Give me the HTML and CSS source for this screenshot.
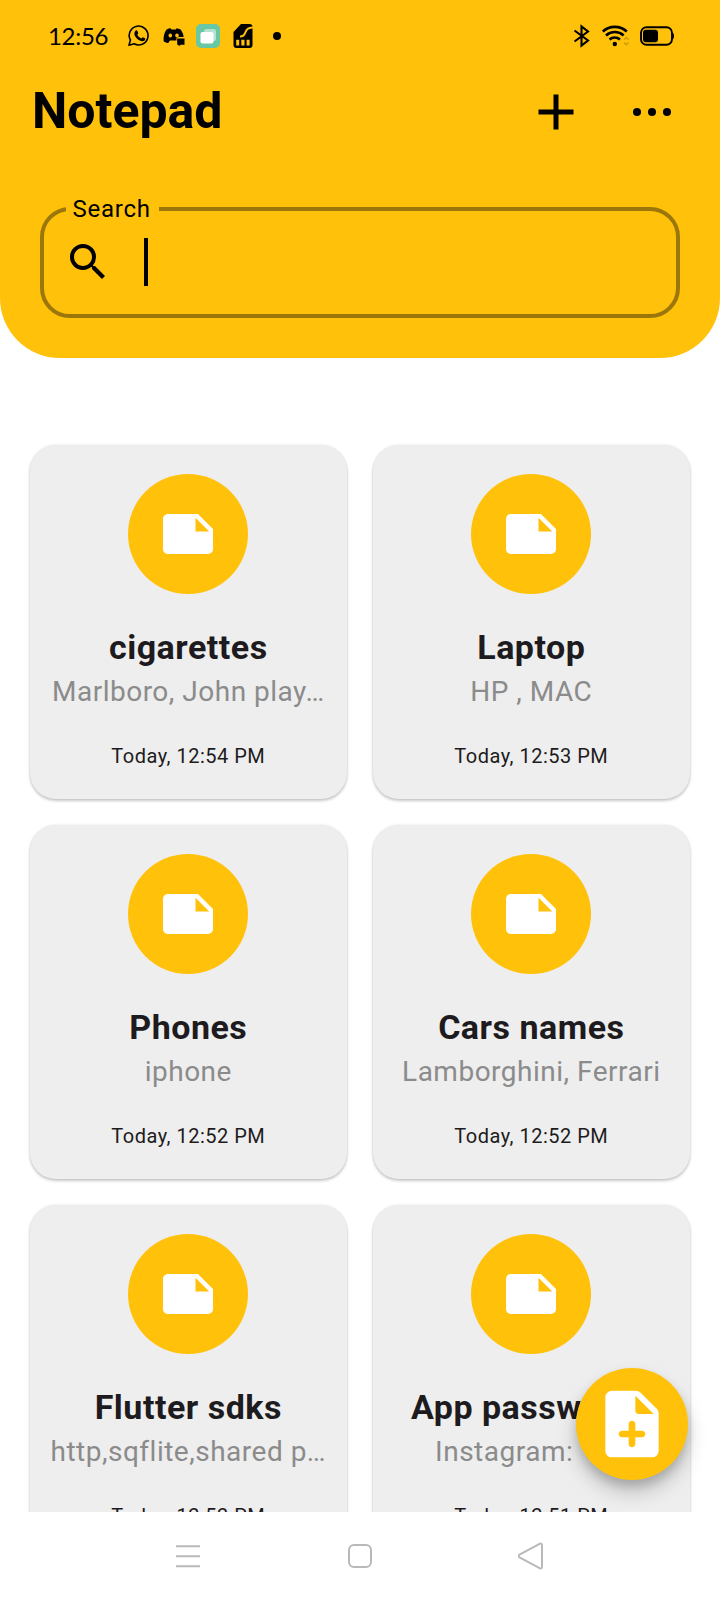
FILE: index.html
```html
<!DOCTYPE html>
<html lang="en">
<head>
<meta charset="utf-8">
<title>Notepad</title>
<link rel="stylesheet" href="styles.css">
</head>
<body>
<svg class="defs" width="0" height="0">
  <symbol id="note" viewBox="0 0 24 24"><path d="M22 10l-6-6H4c-1.1 0-2 .9-2 2v12.01c0 1.1.9 1.99 2 1.99l16-.01c1.1 0 2-.89 2-1.99v-8zm-7-4.5l5.5 5.5H15V5.5z"/></symbol>
</svg>
<div class="screen">
  <header class="header">
    <div class="status">
      <span class="time">12:56</span>
      <svg class="status-left" width="160" height="28" viewBox="124 22 160 28">
        <path d="M129 45.200l1.400-5.200a9.400 9.400 0 1 1 3.700 3.700z" fill="none" stroke="#000" stroke-width="1.6" stroke-linejoin="round"/>
        <path d="M135.300 31c.8-.9 1.700-.8 2.100.1l.8 1.900c.2.600-.6 1.200-.9 1.700.9 1.800 2.300 3 4.100 3.700.5-.4.9-1.400 1.500-1.200l2 1c.7.400.4 1.500-.3 2.200-1.200 1.100-3 .9-4.900 0-2.400-1.100-4.200-3.100-5-4.900-.6-1.500-.3-3.500.6-4.500z"/>
        <path d="M166.500 29.600c1.700-.9 3-1.200 4.200-1.300l.6 1.200h4.600l.6-1.200c1.400.2 2.800.6 4.200 1.300 1.800 2.600 2.700 5 2.900 7.400h-7.100v3.500h-6.500l-1.800 2.400c-1.500 0-3-.6-4.500-1.500-.5-4.400.3-8 2.800-11.800zM170.300 33.600a1.800 2 0 1 0 .01 0zM177 33.600a1.800 2 0 1 0 .01 0z" fill-rule="evenodd"/>
        <path d="M177.200 38.400h7.300v6.300h-3.700l-2 1.500-.3-1.500h-1.300z"/>
        <rect x="196" y="24" width="24" height="24" rx="5" fill="#68c8a3"/>
        <rect x="204" y="29" width="12" height="12" rx="2.500" fill="#b4e4d1"/>
        <rect x="200.500" y="32" width="13" height="11.500" rx="2" fill="#fff"/>
        <path d="M241 24h8.500a3 3 0 0 1 3 3v18a3 3 0 0 1-3 3h-13a3 3 0 0 1-3-3V32z"/>
        <path d="M240 36.500c6.500 0 4-5.500 8-7.800 1.700-1 3.500-1 5-1.200" fill="none" stroke="#ffc10a" stroke-width="2"/>
        <path d="M236.200 39.800h3v5.800h-3zM241.300 39.800h3.200v5.800h-3.200zM246.600 39.800h3v5.800h-3z" fill="#ffc10a"/>
        <circle cx="277" cy="36" r="4"/>
      </svg>
      <svg class="status-right" width="108" height="28" viewBox="570 22 108 28">
        <path d="M574.500 30.500l13.500 10-6.500 5V26.500l6.500 5-13.500 10" fill="none" stroke="#000" stroke-width="2.100"/>
        <g fill="none" stroke="#000" stroke-width="2.600">
          <path d="M602.800 31.500a18 18 0 0 1 24 0"/><path d="M606 35.500a13 13 0 0 1 17.600 0"/><path d="M609.500 39.500a8 8 0 0 1 10.500 0"/>
        </g>
        <circle cx="614.800" cy="44" r="2.200"/>
        <path d="M624 39.800l2.300-2.300 2.300 2.300M624 42.500l2.300 2.300 2.300-2.300" fill="none" stroke="#cf9c08" stroke-width="1.500"/>
        <rect x="641" y="27.300" width="31" height="17.400" rx="5.500" fill="none" stroke="#000" stroke-width="1.900"/>
        <rect x="643" y="29.700" width="15" height="12.600" rx="3"/>
        <path d="M672.500 32.500c2 1 2 6 0 7z"/>
      </svg>
    </div>
    <div class="appbar">
      <h1 class="app-title">Notepad</h1>
      <div class="actions">
        <svg width="60" height="60" viewBox="0 0 24 24"><path d="M19 13h-6v6h-2v-6H5v-2h6V5h2v6h6v2z"/></svg>
        <svg width="60" height="60" viewBox="0 0 60 60"><circle cx="15" cy="30" r="4"/><circle cx="30" cy="30" r="4"/><circle cx="45" cy="30" r="4"/></svg>
      </div>
    </div>
    <fieldset class="search">
      <legend class="search-label">Search</legend>
      <div class="search-row">
        <svg width="48" height="48" viewBox="0 0 24 24"><path d="M15.500 14h-.79l-.28-.27A6.471 6.471 0 0 0 16 9.500 6.500 6.500 0 1 0 9.500 16c1.610 0 3.090-.59 4.230-1.570l.27.28v.79l5 4.990L20.490 19l-4.990-5zm-6 0C7.010 14 5 11.990 5 9.500S7.010 5 9.500 5 14 7.010 14 9.500 11.990 14 9.500 14z"/></svg>
        <span class="caret"></span>
      </div>
    </fieldset>
  </header>

  <main class="notes">
    <article class="card"><span class="badge"><svg width="60" height="60"><use href="#note"/></svg></span><h2 class="title">cigarettes</h2><p class="body">Marlboro, John play&zwnj;…</p><p class="date">Today, 12:54 PM</p></article>
    <article class="card"><span class="badge"><svg width="60" height="60"><use href="#note"/></svg></span><h2 class="title">Laptop</h2><p class="body">HP , MAC</p><p class="date">Today, 12:53 PM</p></article>
    <article class="card"><span class="badge"><svg width="60" height="60"><use href="#note"/></svg></span><h2 class="title">Phones</h2><p class="body">iphone</p><p class="date">Today, 12:52 PM</p></article>
    <article class="card"><span class="badge"><svg width="60" height="60"><use href="#note"/></svg></span><h2 class="title">Cars names</h2><p class="body">Lamborghini, Ferrari</p><p class="date">Today, 12:52 PM</p></article>
    <article class="card"><span class="badge"><svg width="60" height="60"><use href="#note"/></svg></span><h2 class="title">Flutter sdks</h2><p class="body">http,sqflite,shared p…</p><p class="date">Today, 12:52 PM</p></article>
    <article class="card"><span class="badge"><svg width="60" height="60"><use href="#note"/></svg></span><h2 class="title">App passwords</h2><p class="body">Instagram: &nbsp;.....</p><p class="date">Today, 12:51 PM</p></article>
  </main>

  <button class="fab" aria-label="Add note">
    <svg width="80" height="80" viewBox="0 0 24 24"><path d="M14.590 2.590c-.38-.38-.89-.59-1.420-.59H6c-1.100 0-2 .9-2 2v16c0 1.100.89 2 1.990 2H18c1.100 0 2-.9 2-2V8.830c0-.53-.21-1.040-.59-1.410l-4.820-4.830zM15 16h-2v2c0 .55-.45 1-1 1s-1-.45-1-1v-2H9c-.55 0-1-.45-1-1s.45-1 1-1h2v-2c0-.55.45-1 1-1s1 .45 1 1v2h2c.55 0 1 .45 1 1s-.45 1-1 1zm-2-8V3.500L18.500 9H14c-.55 0-1-.45-1-1z"/></svg>
  </button>

  <nav class="navbar">
    <svg width="28" height="28" viewBox="0 0 28 28"><path d="M2 4.300h24M2 14.300h24M2 24.300h24"/></svg>
    <svg width="28" height="28" viewBox="0 0 28 28"><rect x="3" y="3" width="22" height="22" rx="5"/></svg>
    <svg width="28" height="28" viewBox="0 0 28 28"><path d="M1.500 12.700L21.600 1.800q2.400-.9 2.400 1.500v21.400q0 2.400-2.400 1.500L1.500 15.300q-1.900-1.300 0-2.600z"/></svg>
  </nav>
</div>
</body>
</html>
```
FILE: styles.css
```css
* { box-sizing: border-box; }
body { margin: 0; background: #fff; font-family: Roboto, "Liberation Sans", sans-serif; }
h1, h2, p { margin: 0; }
svg { display: block; flex: none; }
.defs { position: absolute; }
.screen { position: relative; width: 720px; height: 1600px; overflow: hidden; display: flex; flex-direction: column; background: #fff; }

.header { flex: none; height: 358px; background: #ffc10a; border-radius: 0 0 60px 60px; }
.status { display: flex; align-items: center; height: 72px; padding: 0 42px 0 48px; }
.time { width: 76px; font: 24px/28px Lato, sans-serif; letter-spacing: -0.3px; white-space: nowrap; }
.status-right { margin-left: auto; }
.appbar { display: flex; align-items: center; justify-content: space-between; height: 80px; padding: 0 38px 0 32px; }
.app-title { padding-bottom: 2px; font-size: 50px; line-height: 60px; font-weight: 700; }
.actions { display: flex; gap: 36px; }

.search { width: 640px; height: 123px; margin: 43px 40px 0; padding: 0 0 0 20px; border: 4px solid #9b760a; border-radius: 30px; }
.search-label { margin-left: 2px; padding: 0 8px 0 6.500px; font-size: 24px; line-height: 28px; letter-spacing: 0.75px; }
.search-row { display: flex; align-items: center; gap: 32px; height: 78px; padding-right: 22px; }
.caret { width: 4px; height: 48px; background: #000; }

.notes { flex: 1; min-height: 0; overflow: hidden; display: grid; grid-template-columns: 317px 317px; grid-auto-rows: 354px; gap: 26px; padding: 86.5px 30.200px 0 29.800px; }
.card { display: flex; flex-direction: column; align-items: center; padding-top: 29.500px; background: #eee; border-radius: 26px; box-shadow: 0 2px 3px rgba(0, 0, 0, 0.2), 0 0 3px rgba(0, 0, 0, 0.1); white-space: nowrap; }
.badge { flex: none; display: flex; align-items: center; justify-content: center; width: 120px; height: 120px; border-radius: 50%; background: #ffc10a; fill: #fff; }
.title { margin-top: 33px; font-size: 34px; line-height: 40px; font-weight: 700; letter-spacing: 0.5px; color: #1d1b20; }
.body { margin-top: 7px; font-size: 28px; line-height: 36px; letter-spacing: 0.5px; color: #8b8b8b; }
.date { margin-top: 34px; font-size: 20px; line-height: 24px; letter-spacing: 0.5px; color: #1d1b20; }

.fab { position: absolute; right: 32px; bottom: 120px; display: flex; align-items: center; justify-content: center; width: 112px; height: 112px; padding: 0; border: 0; border-radius: 50%; background: #ffc10a; fill: #fff; box-shadow: 0 12px 20px rgba(0, 0, 0, 0.2), 0 6px 10px rgba(0, 0, 0, 0.14); }

.navbar { position: relative; flex: none; display: flex; justify-content: space-between; height: 88px; padding: 30px 174px 0; background: #fff; fill: none; stroke: #b9b9b9; stroke-width: 2; }
```
